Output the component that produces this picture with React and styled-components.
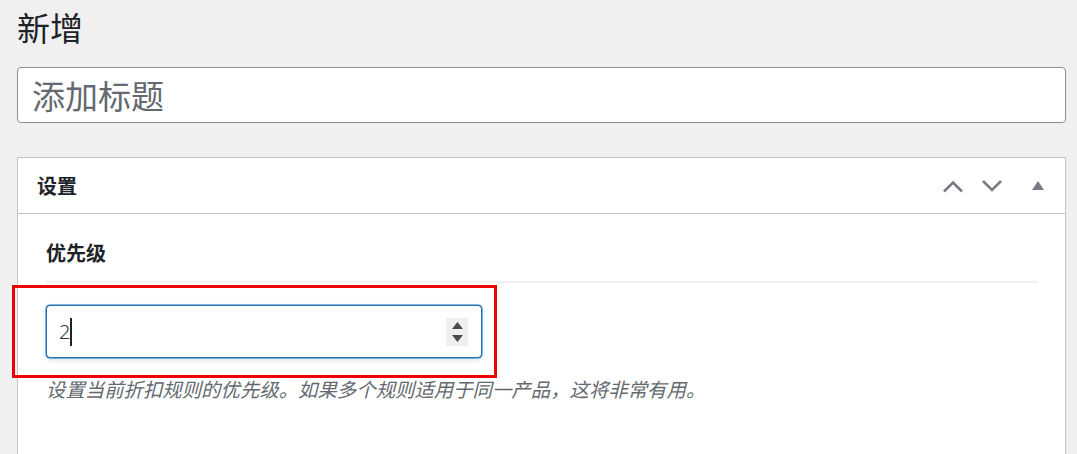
import React from "react";
import styled, { createGlobalStyle } from "styled-components";

const GlobalStyle = createGlobalStyle`
  html, body {
    margin: 0;
    padding: 0;
    background: #f0f0f1;
  }
  body {
    font-family: "Noto Sans", "Noto Sans CJK SC", sans-serif;
    color: #1d2327;
  }
`;

const CJK = `"Noto Sans CJK SC", "Noto Sans", sans-serif`;

const Wrap = styled.div`
  padding: 0 11px 0 17px;
`;

const Heading = styled.h1`
  margin: 0;
  padding-top: 5px;
  font-family: ${CJK};
  font-size: 33px;
  font-weight: 400;
  line-height: 44px;
  color: #1d2327;
`;

const TitleInput = styled.input`
  display: block;
  box-sizing: border-box;
  width: 100%;
  height: 56px;
  margin-top: 18px;
  padding: 0 14px;
  border: 1px solid #8c8f94;
  border-radius: 4px;
  background: #fff;
  font-family: ${CJK};
  font-size: 33px;
  color: #2c3338;
  outline: none;
  &::placeholder {
    color: #646970;
  }
`;

const Postbox = styled.section`
  margin-top: 34px;
  border: 1px solid #c3c4c7;
  border-bottom-width: 0;
  background: #fff;
  height: 296px;
`;

const PostboxHeader = styled.div`
  display: flex;
  align-items: center;
  height: 55px;
  padding-left: 19px;
  border-bottom: 1px solid #c3c4c7;
`;

const PostboxTitle = styled.h2`
  flex: 1;
  margin: 0;
  font-family: ${CJK};
  font-size: 20px;
  font-weight: 700;
  line-height: 28px;
  color: #1d2327;
`;

const HandleButton = styled.button`
  display: flex;
  align-items: center;
  justify-content: center;
  width: ${(p) => p.$w}px;
  height: 55px;
  padding: 0;
  border: 0;
  background: transparent;
  color: #787c82;
  cursor: pointer;
`;

const PostboxBody = styled.div`
  position: relative;
  padding: 25px 27px 0 28px;
`;

const FieldLabel = styled.div`
  padding-bottom: 14px;
  border-bottom: 2px solid #f0f0f1;
  font-family: ${CJK};
  font-size: 20px;
  font-weight: 700;
  line-height: 28px;
  color: #1d2327;
`;

const NumberField = styled.div`
  display: flex;
  align-items: center;
  box-sizing: border-box;
  width: 436px;
  height: 53px;
  margin-top: 22px;
  padding: 0 13px 0 12px;
  border: 1px solid #2271b1;
  border-radius: 4px;
  background: #fff;
  box-shadow: 0 0 0 0.5px #2271b1, 0 2px 5px rgba(34, 113, 177, 0.22);
`;

const NumberValue = styled.span`
  font-family: "Noto Sans", sans-serif;
  font-size: 20px;
  font-weight: 300;
  line-height: 28px;
  color: #2c3338;
`;

const Caret = styled.span`
  width: 2px;
  height: 28px;
  margin-left: 0;
  background: #1d2327;
`;

const Spacer = styled.span`
  flex: 1;
`;

const Spinner = styled.span`
  display: flex;
  flex-direction: column;
  align-items: center;
  justify-content: center;
  gap: 6px;
  width: 22px;
  height: 28px;
  background: #efefef;
`;

const Description = styled.p`
  margin: 17px 0 0;
  font-family: ${CJK};
  font-size: 19.4px;
  font-style: italic;
  line-height: 28px;
  color: #646970;
`;

const Highlight = styled.div`
  position: absolute;
  left: -6px;
  top: 71px;
  width: 485px;
  height: 93px;
  box-sizing: border-box;
  border: 3px solid #ee0000;
  pointer-events: none;
`;

const Chevron = ({ up }) => (
  <svg width="22" height="14" viewBox="0 0 22 14" fill="none">
    <path
      d={up ? "M2 12.5 L11 3.5 L20 12.5" : "M2 2 L11 11 L20 2"}
      stroke="currentColor"
      strokeWidth="2.6"
    />
  </svg>
);

const Triangle = () => (
  <svg width="12" height="9" viewBox="0 0 12 9">
    <path d="M6 0 L12 9 L0 9 Z" fill="currentColor" />
  </svg>
);

const SpinArrow = ({ up }) => (
  <svg width="11" height="7" viewBox="0 0 11 7">
    <path
      d={up ? "M5.5 0 L11 7 L0 7 Z" : "M0 0 L11 0 L5.5 7 Z"}
      fill="#4a4a4a"
    />
  </svg>
);

export default function App() {
  return (
    <>
      <GlobalStyle />
      <Wrap>
        <Heading>新增</Heading>
        <TitleInput placeholder="添加标题" />
        <Postbox>
          <PostboxHeader>
            <PostboxTitle>设置</PostboxTitle>
            <HandleButton $w={39} aria-label="上移">
              <Chevron up />
            </HandleButton>
            <HandleButton $w={39} aria-label="下移">
              <Chevron />
            </HandleButton>
            <HandleButton $w={54} aria-label="切换面板">
              <Triangle />
            </HandleButton>
          </PostboxHeader>
          <PostboxBody>
            <FieldLabel>优先级</FieldLabel>
            <NumberField>
              <NumberValue>2</NumberValue>
              <Caret />
              <Spacer />
              <Spinner>
                <SpinArrow up />
                <SpinArrow />
              </Spinner>
            </NumberField>
            <Description>
              设置当前折扣规则的优先级。如果多个规则适用于同一产品，这将非常有用。
            </Description>
            <Highlight />
          </PostboxBody>
        </Postbox>
      </Wrap>
    </>
  );
}
